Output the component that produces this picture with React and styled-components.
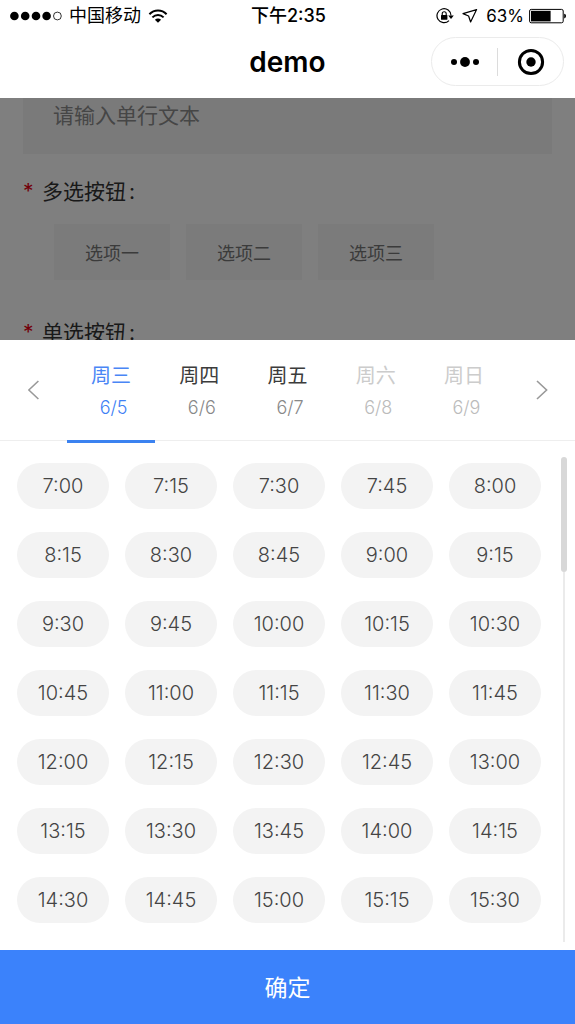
import styled, { createGlobalStyle } from "styled-components";
import { useState } from "react";

const DAYS = [
    { week: "周三", date: "6/5" },
    { week: "周四", date: "6/6" },
    { week: "周五", date: "6/7" },
    { week: "周六", date: "6/8", disabled: true },
    { week: "周日", date: "6/9", disabled: true },
];

// 35 slots, a quarter of an hour apart, from 7:00
const SLOTS = Array.from({ length: 35 }, (_, i) => {
    const minutes = 7 * 60 + i * 15;
    return `${Math.floor(minutes / 60)}:${String(minutes % 60).padStart(2, "0")}`;
});

const StatusBar = () => (
    <Status>
        <StatusGroup>
            <svg width="52" height="10" viewBox="0 0 52 10" aria-hidden="true">
                <circle cx="4.4" cy="5" r="4.3" />
                <circle cx="15.2" cy="5" r="4.3" />
                <circle cx="26" cy="5" r="4.3" />
                <circle cx="36.6" cy="5" r="4.3" />
                <circle cx="47.4" cy="5" r="3.9" fill="none" stroke="#000" strokeWidth="0.8" />
            </svg>
            <span>中国移动</span>
            <svg width="20" height="14" viewBox="0 0 20 14" aria-hidden="true">
                <g fill="none" stroke="#000" strokeWidth="2">
                    <path d="M1.4 5.2 C6.2 0.3 13.8 0.3 18.6 5.2" />
                    <path d="M4.4 8.4 C7.6 5.2 12.4 5.2 15.6 8.4" />
                </g>
                <path d="M6.9 10.7 C8.7 9.1 11.3 9.1 13.1 10.7 L10 13.8 Z" />
            </svg>
        </StatusGroup>
        <Clock>下午2:35</Clock>
        <StatusGroup $end>
            <svg width="18" height="16" viewBox="0 0 18 16" aria-hidden="true">
                <path d="M13 12.6 A7 7 0 1 1 15 7.6" fill="none" stroke="#000" strokeWidth="1.2" />
                <path d="M12.2 7.4 H17.8 L15 11 Z" />
                <rect x="5" y="7" width="6.4" height="4.8" rx="0.5" />
                <path d="M6.2 7.4 V5.8 A2 2 0 0 1 10.2 5.8 V7.4" fill="none" stroke="#000" strokeWidth="1.1" />
            </svg>
            <svg width="16" height="16" viewBox="0 0 16 16" aria-hidden="true">
                <path d="M14.6 1.6 L1 5.6 L6.6 8 L8.6 14 Z" fill="none" stroke="#000" strokeWidth="1.2" strokeLinejoin="round" />
            </svg>
            <Battery>
                63%
                <svg width="38" height="16" viewBox="0 0 38 16" aria-hidden="true">
                    <rect x="0.6" y="1.4" width="33.6" height="13.4" rx="1.6" fill="#fff" stroke="#000" strokeWidth="1" />
                    <rect x="2" y="2.8" width="19.6" height="10.6" />
                    <path d="M35.2 5.8 C37.6 6 37.6 10.2 35.2 10.4 Z" />
                </svg>
            </Battery>
        </StatusGroup>
    </Status>
);

const NavBar = () => (
    <Nav>
        <Title>demo</Title>
        <Capsule>
            <CapsuleButton aria-label="更多">
                <svg width="30" height="12" viewBox="0 0 30 12" aria-hidden="true">
                    <circle cx="4" cy="6" r="3" />
                    <circle cx="15" cy="6" r="4.9" />
                    <circle cx="26" cy="6" r="3" />
                </svg>
            </CapsuleButton>
            <Divider />
            <CapsuleButton aria-label="关闭">
                <svg width="28" height="28" viewBox="0 0 28 28" aria-hidden="true">
                    <circle cx="14" cy="14" r="11.6" fill="none" stroke="#000" strokeWidth="3" />
                    <circle cx="14" cy="14" r="4.7" />
                </svg>
            </CapsuleButton>
        </Capsule>
    </Nav>
);

const FormPage = () => (
    <Form>
        <TextBox type="text" placeholder="请输入单行文本" aria-label="单行文本" />
        <FieldName><Star>*</Star>多选按钮<Colon>:</Colon></FieldName>
        <Options>
            <Option type="button">选项一</Option>
            <Option type="button">选项二</Option>
            <Option type="button">选项三</Option>
        </Options>
        <FieldName><Star>*</Star>单选按钮<Colon>:</Colon></FieldName>
        <Mask />
    </Form>
);

const App = () => {
    const [day, setDay] = useState(0);
    const [slot, setSlot] = useState(null);

    return (
        <Page>
            <GlobalStyle />
            <StatusBar />
            <NavBar />
            <FormPage />
            <Sheet>
                <DayBar>
                    <Arrow aria-label="上一周">
                        <svg width="12" height="20" viewBox="0 0 12 20" aria-hidden="true">
                            <path d="M10.4 1 L0.8 10 L10.4 19" />
                        </svg>
                    </Arrow>
                    {DAYS.map((item, i) => (
                        <Day
                            key={item.date}
                            disabled={item.disabled}
                            $active={day === i}
                            onClick={() => setDay(i)}
                        >
                            <Week>{item.week}</Week>
                            <DateText>{item.date}</DateText>
                        </Day>
                    ))}
                    <Arrow aria-label="下一周">
                        <svg width="12" height="20" viewBox="0 0 12 20" aria-hidden="true">
                            <path d="M1 1 L10.6 10 L1 19" />
                        </svg>
                    </Arrow>
                </DayBar>
                <TimePanel>
                    <Times>
                        {SLOTS.map((time) => (
                            <Time key={time} $active={slot === time} onClick={() => setSlot(time)}>
                                {time}
                            </Time>
                        ))}
                    </Times>
                    <ScrollTrack>
                        <ScrollThumb />
                        <ScrollRail />
                    </ScrollTrack>
                </TimePanel>
                <Confirm>确定</Confirm>
            </Sheet>
        </Page>
    );
};

export default App;

const GlobalStyle = createGlobalStyle`
    * {
        box-sizing: border-box;
    }
    body {
        margin: 0;
        background: #fff;
        font-family: Inter, "Noto Sans CJK SC", sans-serif;
    }
    button, input {
        margin: 0;
        padding: 0;
        border: none;
        background: none;
        font-family: inherit;
        cursor: pointer;
    }
    svg {
        display: block;
        flex: none;
    }
`

const Page = styled.div`
    display: flex;
    flex-direction: column;
    height: 100vh;
`
const Status = styled.header`
    display: grid;
    grid-template-columns: 1fr auto 1fr;
    align-items: center;
    flex: none;
    height: 32px;
    padding: 0 8px 0 10px;
    font-size: 18px;
    line-height: 32px;
    color: #000;
`
const StatusGroup = styled.div`
    display: flex;
    align-items: center;
    justify-content: ${(props) => (props.$end ? "flex-end" : "flex-start")};
    gap: ${(props) => (props.$end ? "8px" : "7px")};
`
const Clock = styled.span`
    font-weight: 500;
`
const Battery = styled.span`
    display: flex;
    align-items: center;
    gap: 5px;
    font-size: 17px;
`
const Nav = styled.nav`
    display: grid;
    grid-template-columns: 1fr auto 1fr;
    align-items: center;
    flex: none;
    height: 66px;
    padding: 0 11px 7px;
`
const Title = styled.h1`
    grid-column: 2;
    margin: 0;
    font-size: 28px;
    line-height: 40px;
    font-weight: 600;
    color: #000;
`
const Capsule = styled.div`
    display: flex;
    align-items: center;
    justify-self: end;
    width: 133px;
    height: 49px;
    border: 1px solid #ebebeb;
    border-radius: 25px;
`
const CapsuleButton = styled.button`
    display: flex;
    flex: 1;
    align-items: center;
    justify-content: center;
    height: 100%;
`
const Divider = styled.span`
    width: 1px;
    height: 28px;
    background: #dcdcdc;
`
const Form = styled.form`
    position: relative;
    flex: 1;
    min-height: 0;
    overflow: hidden;
    padding: 0 23px;
    background: #fff;
`
const TextBox = styled.input`
    display: block;
    width: 100%;
    height: 56px;
    padding: 0 30px 22px;
    background: #f5f5f5;
    font-size: 21px;

    &::placeholder {
        color: #8c8c8c;
        opacity: 1;
    }
`
const FieldName = styled.div`
    display: flex;
    margin-top: 22px;
    font-size: 21px;
    line-height: 32px;
    color: #333;
`
const Star = styled.span`
    width: 19px;
    color: #e60012;
`
const Colon = styled.span`
    padding-left: 3px;
`
const Options = styled.div`
    display: flex;
    gap: 16px;
    padding: 16px 31px 15px;
`
const Option = styled.button`
    width: 116px;
    height: 56px;
    background: #f7f7f7;
    font-size: 18px;
    color: #777;
`
const Mask = styled.div`
    position: absolute;
    inset: 0;
    background: rgba(0, 0, 0, 0.5);
`
const Sheet = styled.section`
    flex: none;
    background: #fff;
`
const DayBar = styled.div`
    display: flex;
    height: 101px;
    border-bottom: 1px solid #eee;
`
const Arrow = styled.button`
    display: flex;
    align-items: center;
    justify-content: center;
    width: 67px;

    path {
        fill: none;
        stroke: #999;
        stroke-width: 1.6;
    }
`
const Day = styled.button`
    display: flex;
    flex: 1;
    flex-direction: column;
    align-items: center;
    margin-bottom: -3px;
    padding-top: 20px;
    border-bottom: 3px solid ${(props) => (props.$active ? "#3b82f0" : "transparent")};
    color: ${(props) => (props.$active ? "#4a86f5" : "#3c3c3c")};

    &:disabled {
        color: #ccc;
    }
    span:last-child {
        color: ${(props) => (props.$active ? "#4080f5" : props.disabled ? "#bbb" : "#888")};
    }
`
const Week = styled.span`
    font-size: 20px;
    line-height: 32px;
`
const DateText = styled.span`
    padding-left: 5px;
    font-size: 18px;
    line-height: 32px;
    font-weight: 300;
`
const TimePanel = styled.div`
    display: flex;
    padding: 16px 8px 8px 17px;
`
const Times = styled.div`
    display: grid;
    flex: 1;
    grid-template-columns: repeat(5, 1fr);
    gap: 23px 16px;
    padding: 6px 20px 19px 0;
`
const Time = styled.button`
    height: 46px;
    border-radius: 23px;
    background: ${(props) => (props.$active ? "#3b82fb" : "#f3f3f3")};
    font-size: 20px;
    font-weight: 300;
    color: ${(props) => (props.$active ? "#fff" : "#444")};
`
const ScrollTrack = styled.div`
    display: flex;
    flex-direction: column;
    align-items: center;
    width: 6px;
`
const ScrollThumb = styled.div`
    width: 6px;
    height: 115px;
    border-radius: 3px;
    background: #d8d8d8;
`
const ScrollRail = styled.div`
    flex: 1;
    width: 2px;
    background: #ebebeb;
`
const Confirm = styled.button`
    display: block;
    width: 100%;
    height: 74px;
    padding-bottom: 3px;
    background: #3b82fb;
    font-size: 23px;
    color: #fff;
`
